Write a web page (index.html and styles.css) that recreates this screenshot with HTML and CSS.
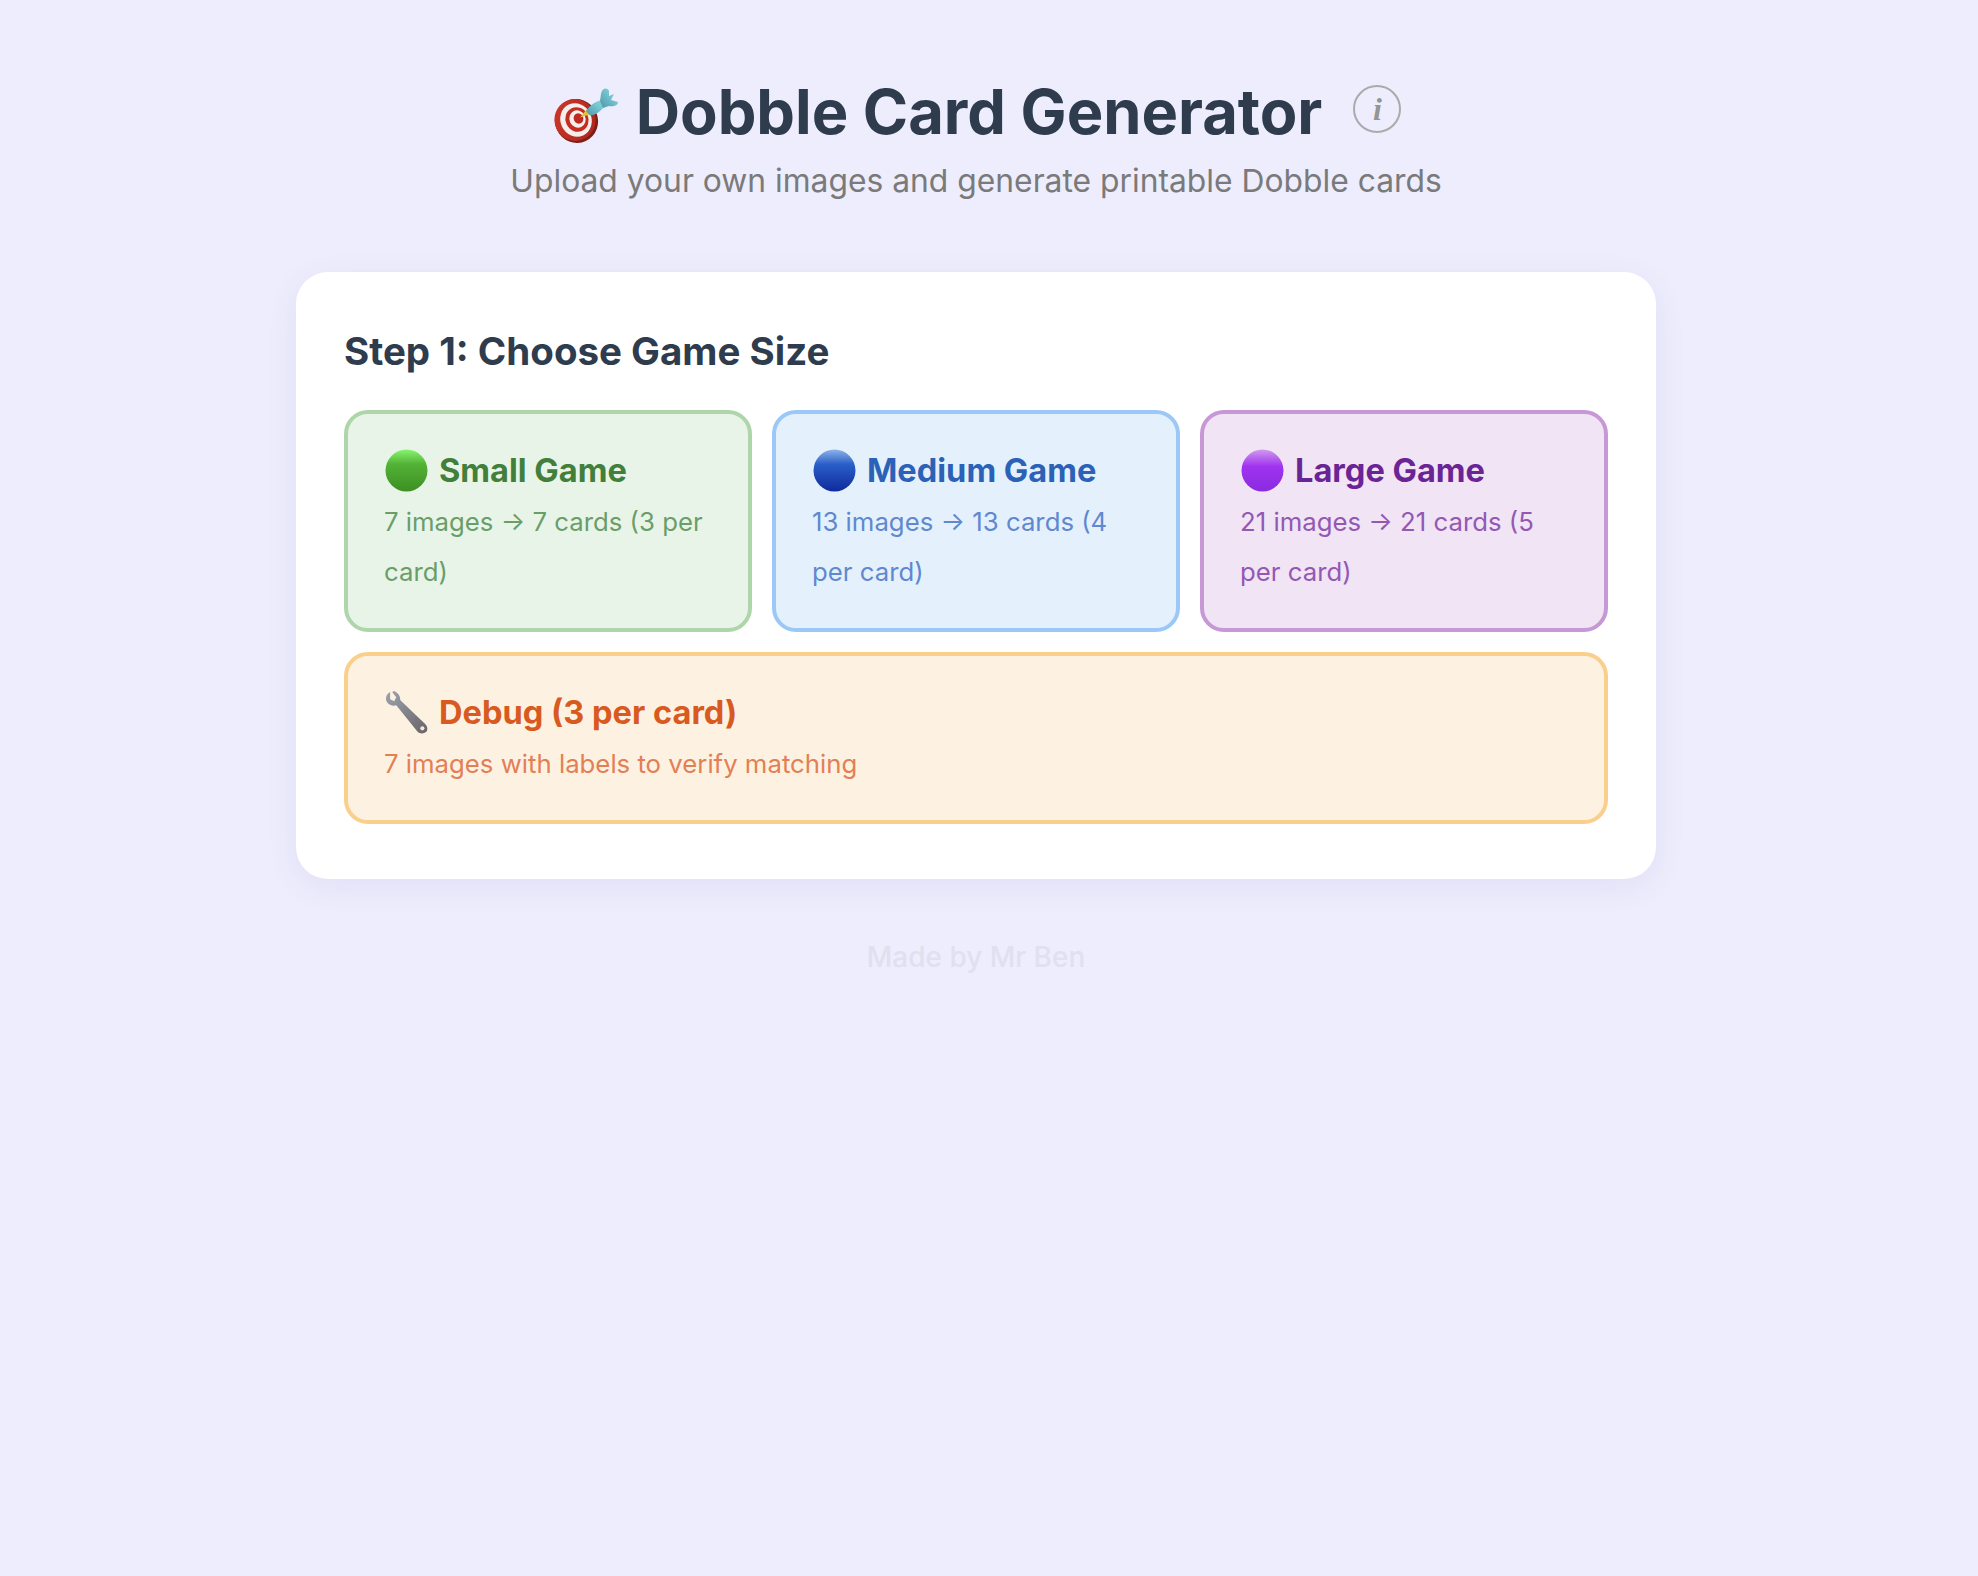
FILE: index.html
```html
<!DOCTYPE html>
<html lang="en">
<head>
<meta charset="utf-8">
<title>Dobble Card Generator</title>
<link rel="stylesheet" href="styles.css">
</head>
<body>
<header class="header">
  <div class="title-row">
    <svg class="emoji-target" viewBox="0 0 64 55" aria-hidden="true">
      <defs>
        <linearGradient id="dart" x1="0" y1="1" x2="1" y2="0"><stop offset="0" stop-color="#4f97a8"/><stop offset=".6" stop-color="#74c4cf"/><stop offset="1" stop-color="#8fd6da"/></linearGradient>
        <linearGradient id="board" x1="0" y1="0" x2="1" y2="1"><stop offset="0" stop-color="#d0372a"/><stop offset="1" stop-color="#a9241b"/></linearGradient>
      </defs>
      <ellipse cx="22.5" cy="33" rx="21.5" ry="22" transform="rotate(-25 22.5 33)" fill="#7f1d16"/>
      <ellipse cx="21" cy="32" rx="20.5" ry="21" transform="rotate(-25 21 32)" fill="url(#board)"/>
      <ellipse cx="22" cy="32" rx="15.5" ry="17" transform="rotate(-25 22 32)" fill="#f4eeec"/>
      <ellipse cx="23" cy="31.5" rx="11.5" ry="12.5" transform="rotate(-25 23 31.5)" fill="#c42d21"/>
      <ellipse cx="23.5" cy="31" rx="8" ry="8.8" transform="rotate(-25 23.5 31)" fill="#f4eeec"/>
      <ellipse cx="24.5" cy="30.5" rx="4.8" ry="5.2" transform="rotate(-25 24.5 30.5)" fill="#bd2b20"/>
      <path d="M26 29.5 L33 21 L37 26 Z" fill="#e4c33a"/>
      <path d="M32 23 C36 17 41 14 47 12 L50 19 C46 24 41 27 36 27.5 Z" fill="url(#dart)"/>
      <path d="M46 13 L47 6 C48 0 53 -1 55 3 L55 8 L60 6 L57 12 L64 14 C64 18 58 19 55 18 L49 20 Z" fill="url(#dart)"/>
    </svg>
    <h1 class="title">Dobble Card Generator</h1>
    <span class="info" aria-label="Information">i</span>
  </div>
  <p class="subtitle">Upload your own images and generate printable Dobble cards</p>
</header>

<main class="panel">
  <h2 class="step">Step 1: Choose Game Size</h2>
  <div class="options">
    <section class="option small">
      <h3 class="option-title">
        <svg class="emoji" viewBox="0 0 42 42" aria-hidden="true">
          <defs><linearGradient id="g-green" x1="0" y1="0" x2="0" y2="1"><stop offset="0" stop-color="#86f56e"/><stop offset=".35" stop-color="#53b236"/><stop offset="1" stop-color="#3d8f22"/></linearGradient></defs>
          <circle cx="21" cy="21" r="20.5" fill="url(#g-green)"/>
        </svg>
        <span>Small Game</span>
      </h3>
      <p class="option-desc">7 images → 7 cards (3 per card)</p>
    </section>
    <section class="option medium">
      <h3 class="option-title">
        <svg class="emoji" viewBox="0 0 42 42" aria-hidden="true">
          <defs><linearGradient id="g-blue" x1="0" y1="0" x2="0" y2="1"><stop offset="0" stop-color="#8db3ea"/><stop offset=".35" stop-color="#2a5fc8"/><stop offset="1" stop-color="#0f2a9c"/></linearGradient></defs>
          <circle cx="21" cy="21" r="20.5" fill="url(#g-blue)"/>
        </svg>
        <span>Medium Game</span>
      </h3>
      <p class="option-desc">13 images → 13 cards (4 per card)</p>
    </section>
    <section class="option large">
      <h3 class="option-title">
        <svg class="emoji" viewBox="0 0 42 42" aria-hidden="true">
          <defs><linearGradient id="g-purple" x1="0" y1="0" x2="0" y2="1"><stop offset="0" stop-color="#cf9bee"/><stop offset=".4" stop-color="#a033f0"/><stop offset="1" stop-color="#8a2be0"/></linearGradient></defs>
          <circle cx="21" cy="21" r="20.5" fill="url(#g-purple)"/>
        </svg>
        <span>Large Game</span>
      </h3>
      <p class="option-desc">21 images → 21 cards (5 per card)</p>
    </section>
    <section class="option debug">
      <h3 class="option-title">
        <svg class="emoji" viewBox="0 0 42 42" aria-hidden="true">
          <defs><linearGradient id="g-wrench" x1="0" y1="0" x2="1" y2="1"><stop offset="0" stop-color="#9aa3ad"/><stop offset="1" stop-color="#6a6468"/></linearGradient></defs>
          <path d="M5 1 C1 3 0 8 2 11 C4 14 8 15 11 14 L32 40 C34 42 39 42 41 39 C42 36 41 34 39 32 L15 9 C15 5 13 2 9 0 L7 1 L11 6 L9 10 L5 8 Z" fill="url(#g-wrench)"/>
          <circle cx="36.5" cy="36.5" r="2" fill="#f2e8dc"/>
        </svg>
        <span>Debug (3 per card)</span>
      </h3>
      <p class="option-desc">7 images with labels to verify matching</p>
    </section>
  </div>
</main>

<footer class="footer">Made by Mr Ben</footer>
</body>
</html>
```
FILE: styles.css
```css
* { box-sizing: border-box; }
html, body { margin: 0; padding: 0; }
body {
  min-height: 1576px;
  padding-right: 26px;
  background: #eeedfd;
  font-family: Inter, "Liberation Sans", sans-serif;
  color: #2e3c4e;
}
.header {
  padding-top: 72px;
  display: flex;
  flex-direction: column;
  align-items: center;
}
.title-row {
  display: flex;
  align-items: center;
  height: 80px;
  padding-left: 3px;
}
.emoji-target { width: 64px; height: 55px; flex: none; margin: 6px 18px 0 0; }
.title {
  margin: 0;
  font-size: 61.4px;
  font-weight: 700;
  line-height: 80px;
  color: #2e3c4e;
}
.info {
  width: 48px;
  height: 48px;
  margin-left: 31px;
  margin-top: -6px;
  border: 2px solid #aaaaaa;
  border-radius: 50%;
  display: flex;
  align-items: center;
  justify-content: center;
  font-family: "Liberation Serif", serif;
  font-style: italic;
  font-weight: 700;
  font-size: 32px;
  color: #959595;
}
.subtitle {
  margin: 9px 0 0;
  font-size: 31.8px;
  line-height: 40px;
  color: #7a7a7a;
}
.panel {
  width: 1360px;
  margin: 71px auto 0;
  padding: 56px 48px 55px;
  background: #ffffff;
  border-radius: 32px;
  box-shadow: 0 8px 32px rgba(80, 80, 160, 0.08);
}
.step {
  margin: 0 0 36px;
  font-size: 38.5px;
  line-height: 46px;
  font-weight: 700;
  color: #2e3c4e;
}
.options {
  display: grid;
  grid-template-columns: repeat(3, 1fr);
  gap: 20px;
}
.option {
  padding: 33px 36px 31px;
  border: 4px solid;
  border-radius: 24px;
}
.option-title {
  margin: 0;
  display: flex;
  align-items: center;
  gap: 11px;
  font-size: 32.6px;
  line-height: 46px;
  font-weight: 700;
}
.emoji { width: 43px; height: 43px; flex: none; margin-left: 1px; }
.option-desc {
  margin: 4px 0 0;
  font-size: 25.75px;
  line-height: 50px;
}
.small { background: #e9f4e9; border-color: #afd5ab; }
.small .option-title { color: #427f3a; }
.small .option-desc { color: #6a9e68; }
.medium { background: #e4f1fc; border-color: #9bc8f6; }
.medium .option-title { color: #2b62b8; }
.medium .option-desc { color: #5f88d0; }
.large { background: #f1e4f4; border-color: #c698d6; }
.large .option-title { color: #6a2496; }
.large .option-desc { color: #9358b4; }
.debug { grid-column: 1 / -1; background: #fdf2e2; border-color: #f9cf8b; }
.debug .option-title { color: #d85a20; }
.debug .option-desc { color: #e37f55; }
.footer {
  margin-top: 58px;
  text-align: center;
  font-size: 28px;
  font-weight: 500;
  line-height: 40px;
  color: #e0e0ee;
}
```
